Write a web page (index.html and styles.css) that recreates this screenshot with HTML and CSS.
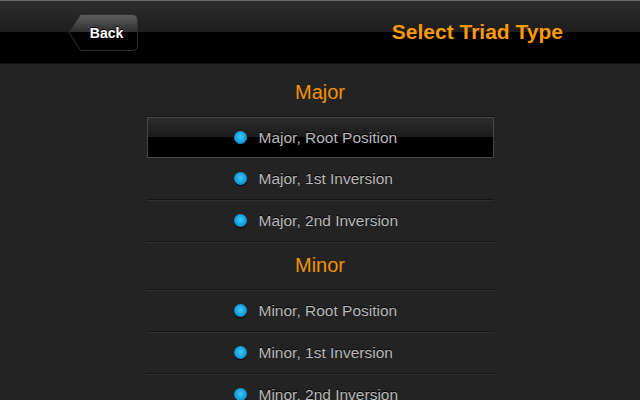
FILE: index.html
```html
<!DOCTYPE html>
<html>
<head>
  <title>Select Triad Type</title>
  <link rel="stylesheet" href="styles.css">
</head>
<body>
  <!-- Top bar -->
  <div class="topbar">
    <button class="back">
      <svg class="back-shape" width="71" height="39" viewBox="0 0 71 39">
        <defs>
          <linearGradient id="backFill" x1="0" y1="0" x2="0" y2="1">
            <stop offset="0" stop-color="#606060"/>
            <stop offset="0.48" stop-color="#2e2e2e"/>
            <stop offset="0.48" stop-color="#000"/>
            <stop offset="1" stop-color="#000"/>
          </linearGradient>
        </defs>
        <path d="M1 19.5 L12.5 1.5 H64 Q69.5 1.5 69.5 7 V32 Q69.5 37.5 64 37.5 H12.5 Z"
              fill="url(#backFill)" stroke="#2f2f2f" stroke-width="1"/>
      </svg>
      <span class="back-label">Back</span>
    </button>
    <h1 class="title">Select Triad Type</h1>
  </div>

  <!-- Triad list -->
  <div class="list">
    <div class="group-title">Major</div>
    <div class="row selected"><span class="dot"></span>Major, Root Position</div>
    <div class="row"><span class="dot"></span>Major, 1st Inversion</div>
    <div class="row"><span class="dot"></span>Major, 2nd Inversion</div>

    <div class="group-title">Minor</div>
    <div class="row"><span class="dot"></span>Minor, Root Position</div>
    <div class="row"><span class="dot"></span>Minor, 1st Inversion</div>
    <div class="row"><span class="dot"></span>Minor, 2nd Inversion</div>
  </div>
</body>
</html>
```

FILE: styles.css
```css
body {
  margin: 0;
  background-color: #232323;
  font-family: "Liberation Sans", Arial, sans-serif;
  overflow: hidden;
}
.topbar {
  height: 62px;
  display: flex;
  align-items: center;
  justify-content: space-between;
  padding: 0 77px 0 68px;
  border-top: 1px solid #6a6a6a;
  border-bottom: 1px solid #141414;
  background: linear-gradient(#2d2d2d 0, #1e1e1e 31px, #000 31px, #000 100%);
}
.back {
  position: relative;
  width: 71px;
  height: 39px;
  margin-top: 1px;
  padding: 0 0 0 6px;
  border: none;
  background: none;
  cursor: pointer;
}
.back-shape {
  position: absolute;
  left: 0;
  top: 0;
}
.back-label {
  position: relative;
  font-family: "Liberation Sans", Arial, sans-serif;
  font-weight: bold;
  font-size: 14px;
  color: #fff;
  text-shadow: 0 -1px 0 #000;
}
.title {
  margin: 0;
  font-size: 21px;
  font-weight: bold;
  color: #ff9a00;
}
.list {
  width: 347px;
  margin: 0 auto;
  padding-top: 5px;
}
.group-title {
  height: 47px;
  line-height: 47px;
  text-align: center;
  font-size: 20px;
  color: #f39200;
  border-bottom: 1px solid #141414;
  box-shadow: 0 1px 0 #303030;
}
.row {
  height: 41px;
  display: flex;
  align-items: center;
  padding-left: 87px;
  font-size: 15.5px;
  color: #b9b9b9;
  text-shadow: 0 -1px 0 #000;
  border-bottom: 1px solid #141414;
  box-shadow: 0 1px 0 #303030;
}
.row.selected {
  height: 39px;
  padding-left: 86px;
  border: 1px solid #474747;
  background: linear-gradient(#2c2c2c 0, #1b1b1b 19px, #000 19px, #000 100%);
  box-shadow: none;
}
.dot {
  width: 13px;
  height: 13px;
  margin-right: 12px;
  border-radius: 50%;
  background: radial-gradient(circle at 50% 45%, #3ccaf4 0, #1aa6e2 45%, #0874b4 100%);
  box-shadow: 0 1px 1px #000;
}
```
